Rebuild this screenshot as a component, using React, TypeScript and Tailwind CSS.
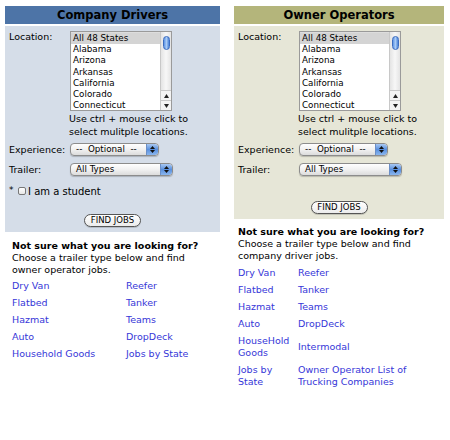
import type { ReactNode } from "react";

const STATES = [
  "All 48 States",
  "Alabama",
  "Arizona",
  "Arkansas",
  "California",
  "Colorado",
  "Connecticut",
];

// ── Aqua-style form bits ───────────────────────────────────

function ListBox() {
  return (
    <div className="flex h-[80px] w-[102px] border border-[#9a9a9a] bg-white shadow-[inset_0_1px_1px_rgba(0,0,0,0.15)]">
      <div className="flex-1 overflow-hidden pt-px">
        {STATES.map((s, i) => (
          <div
            key={s}
            className={
              "h-[11.2px] pl-[2px] text-[8.75px] leading-[11.2px] text-black " +
              (i === 0 ? "bg-[#d4d4d4]" : "")
            }
          >
            {s}
          </div>
        ))}
      </div>
      {/* scrollbar */}
      <div className="relative flex w-[11px] flex-col border-l border-[#c8c8c8] bg-gradient-to-r from-[#e4e4e4] via-[#f7f7f7] to-[#e4e4e4]">
        <div className="mx-auto mt-[4px] h-[14px] w-[7px] rounded-full border border-[#3c6cbf] bg-gradient-to-r from-[#5e95e6] via-[#a9cbf6] to-[#4a82d6]" />
        <div className="flex-1" />
        <div className="flex h-[10px] items-center justify-center border-t border-[#c8c8c8] bg-[#f3f3f3]">
          <svg width="5" height="4" viewBox="0 0 5 4">
            <path d="M2.5 0L5 4H0z" fill="#222" />
          </svg>
        </div>
        <div className="flex h-[10px] items-center justify-center border-t border-[#c8c8c8] bg-[#f3f3f3]">
          <svg width="5" height="4" viewBox="0 0 5 4">
            <path d="M0 0h5L2.5 4z" fill="#222" />
          </svg>
        </div>
      </div>
    </div>
  );
}

function PopUp({ label, width }: { label: string; width: string }) {
  return (
    <div
      className={
        "flex h-[13px] items-center overflow-hidden rounded-[4px] border border-[#8c8c8c] bg-gradient-to-b from-white via-[#f1f1f1] to-[#dcdcdc] shadow-[0_1px_1px_rgba(0,0,0,0.2)] " +
        width
      }
    >
      <span className="flex-1 whitespace-pre pl-[5px] text-[8.75px] leading-[13px] text-black">
        {label}
      </span>
      <div className="flex h-full w-[12px] flex-col items-center justify-center gap-[1px] rounded-r-[3px] border-l border-[#6b8fc7] bg-gradient-to-b from-[#a8c8f2] via-[#5a90de] to-[#8ab6ee]">
        <svg width="5" height="3" viewBox="0 0 5 3">
          <path d="M2.5 0L5 3H0z" fill="#111" />
        </svg>
        <svg width="5" height="3" viewBox="0 0 5 3">
          <path d="M0 0h5L2.5 3z" fill="#111" />
        </svg>
      </div>
    </div>
  );
}

function FindJobs() {
  return (
    <div className="flex justify-center">
      <button className="h-[13px] w-[57px] rounded-full border border-[#555] bg-gradient-to-b from-white to-[#ececec] text-[8.5px] leading-[11px] text-black shadow-[0_1px_0_rgba(0,0,0,0.15)]">
        FIND JOBS
      </button>
    </div>
  );
}

function Row({
  label,
  labelClass = "",
  children,
}: {
  label: string;
  labelClass?: string;
  children: ReactNode;
}) {
  return (
    <div className="flex">
      <div className={"w-[61px] leading-[13px] " + labelClass}>{label}</div>
      {children}
    </div>
  );
}

// ── Search panel ───────────────────────────────────────────

function SearchPanel({
  title,
  headerBg,
  bodyBg,
  student,
}: {
  title: string;
  headerBg: string;
  bodyBg: string;
  student?: boolean;
}) {
  return (
    <div>
      <div
        className={
          "mt-[6px] h-[18px] text-center text-[11.5px] font-bold leading-[18px] text-black " +
          headerBg
        }
      >
        {title}
      </div>
      <div className={"mt-[2px] px-[4px] pb-[5px] pt-[5px] " + bodyBg}>
        <Row label="Location:" labelClass="-mt-[1px]">
          <div>
            <ListBox />
            <div className="ml-[-1px] mt-[1px] text-[9.5px] leading-[13px]">
              Use ctrl + mouse click to
              <br />
              select mulitple locations.
            </div>
          </div>
        </Row>
        <div className="mt-[5px]">
          <Row label="Experience:">
            <PopUp label="--  Optional  --" width="w-[89px]" />
          </Row>
        </div>
        <div className="mt-[7px]">
          <Row label="Trailer:">
            <PopUp label="All Types" width="w-[103px]" />
          </Row>
        </div>
        {student ? (
          <>
            <div className="mt-[9px] flex h-[12px] items-center text-[10px]">
              <span className="w-[9px] text-[9px]">*</span>
              <span className="mr-[2px] h-[8px] w-[8px] rounded-[2px] border border-[#777] bg-gradient-to-b from-white to-[#e6e6e6]" />
              <span>I am a student</span>
            </div>
            <div className="mt-[17px]">
              <FindJobs />
            </div>
          </>
        ) : (
          <div className="mt-[25px]">
            <FindJobs />
          </div>
        )}
      </div>
    </div>
  );
}

const LINK = "text-[#3636d8]";

export default function App() {
  return (
    <div className="flex h-[440px] w-[450px] bg-white pl-[5px] font-['DejaVu_Sans',Verdana,sans-serif] text-[9.5px] text-black">
      {/* Company drivers */}
      <div className="w-[215px]">
        <SearchPanel
          title="Company Drivers"
          headerBg="bg-[#4d74a7]"
          bodyBg="bg-[#d5dde8]"
          student
        />
        <div className="pl-[7px] pt-[8px] leading-[12px]">
          <div className="font-bold">Not sure what you are looking for?</div>
          <div>
            Choose a trailer type below and find
            <br />
            owner operator jobs.
          </div>
          <div className={"mt-[1px] grid grid-cols-[114px_1fr] " + LINK}>
            {[
              ["Dry Van", "Reefer"],
              ["Flatbed", "Tanker"],
              ["Hazmat", "Teams"],
              ["Auto", "DropDeck"],
              ["Household Goods", "Jobs by State"],
            ].map(([a, b]) => (
              <div key={a} className="contents">
                <div className="py-[2.5px]">{a}</div>
                <div className="py-[2.5px]">{b}</div>
              </div>
            ))}
          </div>
        </div>
      </div>

      {/* Owner operators */}
      <div className="ml-[14px] w-[210px]">
        <SearchPanel
          title="Owner Operators"
          headerBg="bg-[#b4b57b]"
          bodyBg="bg-[#e6e6d7]"
        />
        <div className="pl-[4px] pt-[7px] leading-[12px]">
          <div className="font-bold">Not sure what you are looking for?</div>
          <div>
            Choose a trailer type below and find
            <br />
            company driver jobs.
          </div>
          <div className={"mt-[2px] grid grid-cols-[60px_1fr] items-center " + LINK}>
            {[
              ["Dry Van", "Reefer"],
              ["Flatbed", "Tanker"],
              ["Hazmat", "Teams"],
              ["Auto", "DropDeck"],
              ["HouseHold Goods", "Intermodal"],
              ["Jobs by State", "Owner Operator List of Trucking Companies"],
            ].map(([a, b]) => (
              <div key={a} className="contents">
                <div className="py-[2.5px] pr-[4px]">{a}</div>
                <div className="py-[2.5px]">{b}</div>
              </div>
            ))}
          </div>
        </div>
      </div>
    </div>
  );
}
